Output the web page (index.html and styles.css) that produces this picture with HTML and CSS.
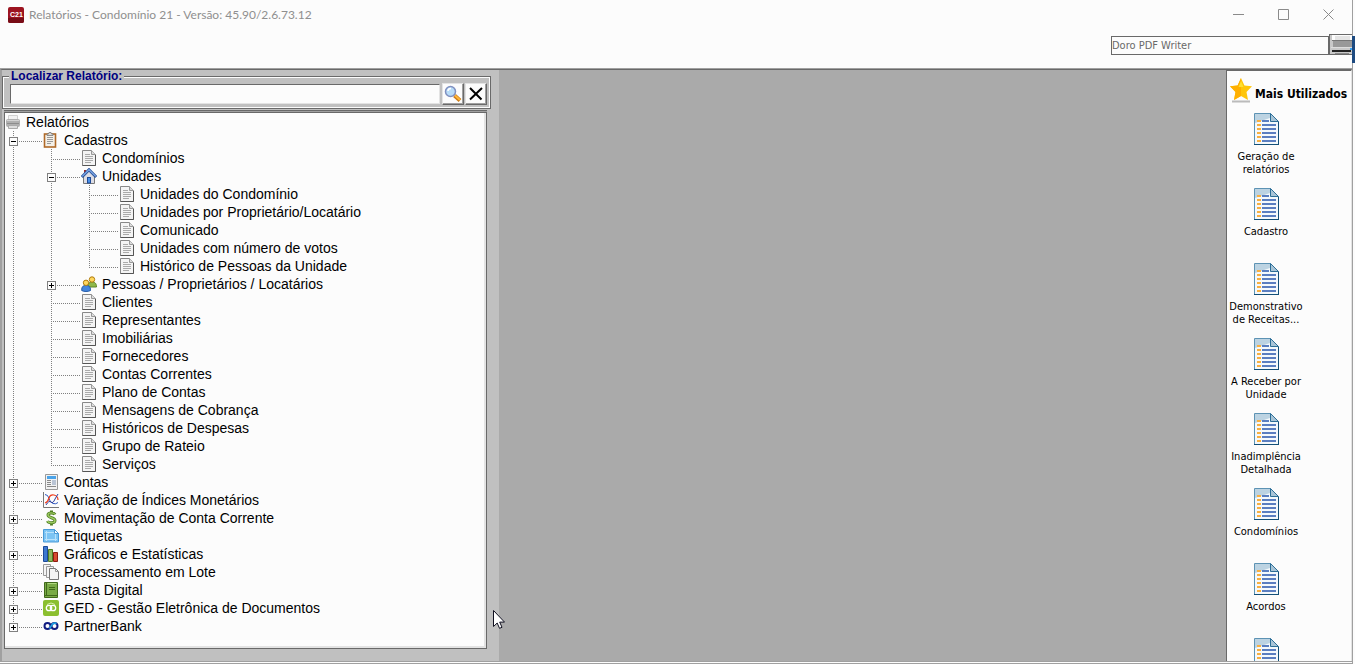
FILE: index.html
```
<!DOCTYPE html>
<html lang="pt-BR">

<head>
    <meta charset="utf-8">
    <meta name="viewport" content="width=device-width, initial-scale=1">
    <title>Relatórios - Condomínio 21</title>
    <link rel="stylesheet" href="styles.css">
</head>

<body>
<svg class="sprite" aria-hidden="true">
    <symbol id="i-doc" viewBox="0 0 16 16">
        <path d="M1.500 .5h9l4 4v11h-13z" fill="#f4f4f4" stroke="#888"/>
        <path d="M14.500 5v10.500h-13" fill="none" stroke="#555"/>
        <path d="M10.500 .5v4h4" fill="#ddd" stroke="#999"/>
        <path d="M4 4.500h5M4 6.500h8M4 8.500h8M4 10.500h8M4 12.500h6" stroke="#aaa"/>
    </symbol>
    <symbol id="i-printer" viewBox="0 0 16 16">
        <path d="M3.500 1.500h9v5h-9z" fill="#f2f2f2" stroke="#d0d0d0"/>
        <rect x="1" y="5" width="14" height="8" rx="2" fill="#b0b0b0"/>
        <path d="M2 6.500h12" stroke="#d4d4d4"/>
        <path d="M2 9.500h12" stroke="#8c8c8c"/>
        <path d="M3.500 11.500h9v3h-9z" fill="#dedede" stroke="#aaa"/>
    </symbol>
    <symbol id="i-clip" viewBox="0 0 16 16">
        <rect x="1.500" y="2" width="11" height="13" fill="#f4f0e8" stroke="#b06a28" stroke-width="1.600"/>
        <path d="M4 3.500V2h1.500l.5-1.500h2L8.500 2H10v1.500z" fill="#ddd" stroke="#777" stroke-width=".8"/>
        <path d="M4 5.500h6M4 7.500h6M4 9.500h6M4 11.500h4" stroke="#999"/>
    </symbol>
    <symbol id="i-home" viewBox="0 0 16 16">
        <path d="M3 2h2v5H3z" fill="#9a3030"/>
        <path d="M2.500 8L8 3l5.500 5v7.500h-11z" fill="#dcdce4" stroke="#777"/>
        <path d="M.8 9L8 1.800 15.200 9" fill="none" stroke="#2a549c" stroke-width="3"/>
        <path d="M1.200 8.400L8 1.700l6.800 6.700" fill="none" stroke="#7fa9e8" stroke-width="1.200"/>
        <rect x="6.500" y="9.500" width="3" height="5.500" fill="#4a90e8" stroke="#1d4a98"/>
    </symbol>
    <symbol id="i-people" viewBox="0 0 16 16">
        <path d="M7 11c0-4 1.500-5 4-5s4.500 1 4.500 5z" fill="#8fb84a" stroke="#5d8527"/>
        <circle cx="11" cy="3.500" r="2.700" fill="#ffd75e" stroke="#b07c10"/>
        <path d="M.7 14.500c0-4 1.300-5 4.300-5s4.500 1 4.500 5c-2 1.300-7 1.300-8.800 0z" fill="#4486dc" stroke="#245aa8"/>
        <circle cx="5" cy="6.800" r="2.700" fill="#ffd75e" stroke="#b07c10"/>
    </symbol>
    <symbol id="i-bill" viewBox="0 0 16 16">
        <path d="M2.500 .5h12v15h-12z" fill="#f2f2f2" stroke="#999"/>
        <path d="M4 2h9v3H4z" fill="#4aa3e8"/>
        <path d="M4 6.500h4M4 8.500h4M4 10.500h4M4 12.500h9" stroke="#888"/>
        <path d="M9 6h4v5H9z" fill="#b9c4d4"/>
    </symbol>
    <symbol id="i-chart" viewBox="0 0 16 16">
        <path d="M.5 0v15.500H16" fill="none" stroke="#777"/>
        <path d="M2 2.500q3 0 4 4t4 5 5-1" fill="none" stroke="#3058c0"/>
        <path d="M2 11q3-1 4-5t5-3 4 5" fill="none" stroke="#f04020" stroke-width="1.200"/>
        <path d="M3 13q3-5 5-3t4-3l3-5" fill="none" stroke="#30409c"/>
    </symbol>
    <symbol id="i-money" viewBox="0 0 16 16">
        <path d="M12 4.500C11 2.500 5 2 5 5s7 2.500 7 5.500-6.500 3-7.500.5M8.500 .5v3M8.500 12v3.500" fill="none" stroke="#4f7d22" stroke-width="3"/>
        <path d="M12 4.500C11 2.500 5 2 5 5s7 2.500 7 5.500-6.500 3-7.500.5" fill="none" stroke="#9ccb60" stroke-width="1.400"/>
    </symbol>
    <symbol id="i-label" viewBox="0 0 16 16">
        <path d="M.5 1.500h11l4 4v8.500H.5z" fill="#7cc4f4" stroke="#4a9bd8"/>
        <path d="M2 4.500h9M2 11.500h12M3.500 3v10M12.500 6v7" fill="none" stroke="#b9e2fb"/>
        <path d="M11.500 1.500v4h4z" fill="#fff" stroke="#4a9bd8"/>
    </symbol>
    <symbol id="i-bars" viewBox="0 0 16 16">
        <path d="M.5 .5h4v15h-4z" fill="#3c78d0" stroke="#1d4a98"/>
        <path d="M5.500 3.500h4v12h-4z" fill="#8db660" stroke="#4f7d22"/>
        <path d="M10.500 6.500h4v9h-4z" fill="#d84a30" stroke="#8c1c10"/>
    </symbol>
    <symbol id="i-batch" viewBox="0 0 16 16">
        <path d="M.5 .5h7v11h-7z" fill="#f4f4f4" stroke="#999"/>
        <path d="M3.500 2.500h7v11h-7z" fill="#f4f4f4" stroke="#999"/>
        <path d="M6.500 4.500h6l3 3v8h-9z" fill="#f4f4f4" stroke="#777"/>
        <path d="M12.500 4.500v3h3" fill="none" stroke="#999"/>
    </symbol>
    <symbol id="i-book" viewBox="0 0 16 16">
        <path d="M1.500 .5h13v15h-13z" fill="#79aa45" stroke="#41691b"/>
        <path d="M3.500 1v12M2 13.500h12" stroke="#41691b"/>
        <path d="M6 5.500h6M6 7.500h6" stroke="#41691b"/>
        <path d="M4.500 1.500h9" stroke="#b0d880"/>
    </symbol>
    <symbol id="i-ged" viewBox="0 0 16 16">
        <rect width="16" height="16" rx="2" fill="#8bbf2f"/>
        <circle cx="6" cy="8" r="2.700" fill="none" stroke="#fff" stroke-width="1.300"/>
        <circle cx="10" cy="8" r="2.700" fill="none" stroke="#fff" stroke-width="1.300"/>
        <path d="M4 4.500q4-3 8 0" fill="none" stroke="#d8efa8"/>
    </symbol>
    <symbol id="i-bank" viewBox="0 0 16 16">
        <circle cx="4.500" cy="8" r="3" fill="none" stroke="#101c80" stroke-width="2"/>
        <circle cx="11.500" cy="8" r="3" fill="none" stroke="#101c80" stroke-width="2"/>
        <path d="M6.500 10.500l3-4.500q2-1.500 4-.5" fill="none" stroke="#1ea0e0" stroke-width="1.600"/>
    </symbol>
    <symbol id="i-report" viewBox="0 0 25 32">
        <path d="M.5 .5h16l8 8v23H.5z" fill="#f4f9fc" stroke="#5d93b4"/>
        <path d="M1 1h15v4L1 10z" fill="#bcd3e2"/>
        <path d="M16.500 .5v8h8z" fill="#a8c4d6" stroke="#2d6f98"/>
        <path d="M0 31.500h25M24.500 9v23" stroke="#145078"/>
        <path d="M3 8h4M3 12h4M3 16h4M3 20h4M3 24h4M3 28h4" stroke="#f8b040" stroke-width="2"/>
        <path d="M8 8h7M8 12h14M8 16h14M8 20h14M8 24h14M8 28h14" stroke="#5a7ec0" stroke-width="2"/>
    </symbol>
</svg>

<div class="window">
    <header class="titlebar">
        <svg class="logo" viewBox="0 0 16 16" aria-hidden="true">
            <rect width="16" height="16" rx="2" fill="#9c1420"/>
            <path d="M0 11h16v3q0 2-2 2H2q-2 0-2-2z" fill="#780c16"/>
            <text class="logo-text" x="2" y="10" fill="#fff">C21</text>
        </svg>
        <h1 class="title">Relatórios - Condomínio 21 - Versão: 45.90/2.6.73.12</h1>
        <div class="controls">
            <button type="button" aria-label="Minimizar"><svg viewBox="0 0 11 11"><path d="M0 5.500h11"/></svg></button>
            <button type="button" aria-label="Maximizar"><svg viewBox="0 0 11 11"><path d="M.5 .5h10v10H.5z"/></svg></button>
            <button type="button" aria-label="Fechar"><svg viewBox="0 0 11 11"><path d="M.5 .5l10 10M10.500 .5l-10 10"/></svg></button>
        </div>
    </header>

    <div class="toolbar">
        <input class="printer-name" type="text" value="Doro PDF Writer" aria-label="Impressora" readonly>
        <button class="printer-btn" type="button" aria-label="Selecionar impressora">
            <svg viewBox="0 0 22 19" aria-hidden="true">
                <path d="M0 0h22v19H0z" fill="#c8c8c8"/>
                <path d="M2 0h20v5H2z" fill="#fcfcfc"/>
                <path d="M5 1h15v4H5z" fill="#e4e4e4"/>
                <path d="M3 6h19v6H3z" fill="#999"/>
                <path d="M2 5.500h20" stroke="#777"/>
                <path d="M1 12.500h21" stroke="#ddd"/>
                <path d="M2 16h19" stroke="#222" stroke-width="2"/>
                <path d="M20 14h2" stroke="#38a0f0" stroke-width="2"/>
                <path d="M5 18.500h14" stroke="#888"/>
            </svg>
        </button>
    </div>

    <main class="workspace">
        <section class="sidebar">
            <form class="search">
                <fieldset>
                    <legend><label for="busca">Localizar Relatório:</label></legend>
                    <div class="search-row">
                        <input type="text" id="busca">
                        <button type="button" aria-label="Pesquisar">
                            <svg viewBox="0 0 18 18" aria-hidden="true">
                                <path d="M10.500 10.500l5.500 5" stroke="#c87818" stroke-width="4"/>
                                <path d="M11 10.500l5 4.500" stroke="#ffb838" stroke-width="2"/>
                                <circle cx="6.500" cy="6.500" r="5" fill="#b8dcf8" stroke="#8090c0" stroke-width="1.500"/>
                                <path d="M4 6q0-2.500 3-2.500" fill="none" stroke="#fff" stroke-width="1.500"/>
                            </svg>
                        </button>
                        <button type="reset" aria-label="Limpar">
                            <svg viewBox="0 0 18 18" aria-hidden="true">
                                <path d="M3 3l11.500 11.500M15 3L3 14.500" stroke="#000" stroke-width="2"/>
                            </svg>
                        </button>
                    </div>
                </fieldset>
            </form>

            <nav class="tree" aria-label="Relatórios">
                <div class="row"><svg><use href="#i-printer"/></svg><span>Relatórios</span></div>
                <ul class="top">
                    <li>
                        <div class="row"><div class="branch"><button class="toggle" type="button" aria-label="Recolher Cadastros"></button></div><svg><use href="#i-clip"/></svg><span>Cadastros</span></div>
                        <ul>
                            <li><div class="row"><div class="branch"></div><svg><use href="#i-doc"/></svg><span>Condomínios</span></div></li>
                            <li>
                                <div class="row"><div class="branch"><button class="toggle" type="button" aria-label="Recolher Unidades"></button></div><svg><use href="#i-home"/></svg><span>Unidades</span></div>
                                <ul>
                                    <li><div class="row"><div class="branch"></div><svg><use href="#i-doc"/></svg><span>Unidades do Condomínio</span></div></li>
                                    <li><div class="row"><div class="branch"></div><svg><use href="#i-doc"/></svg><span>Unidades por Proprietário/Locatário</span></div></li>
                                    <li><div class="row"><div class="branch"></div><svg><use href="#i-doc"/></svg><span>Comunicado</span></div></li>
                                    <li><div class="row"><div class="branch"></div><svg><use href="#i-doc"/></svg><span>Unidades com número de votos</span></div></li>
                                    <li><div class="row"><div class="branch"></div><svg><use href="#i-doc"/></svg><span>Histórico de Pessoas da Unidade</span></div></li>
                                </ul>
                            </li>
                            <li><div class="row"><div class="branch"><button class="toggle plus" type="button" aria-label="Expandir Pessoas"></button></div><svg><use href="#i-people"/></svg><span>Pessoas / Proprietários / Locatários</span></div></li>
                            <li><div class="row"><div class="branch"></div><svg><use href="#i-doc"/></svg><span>Clientes</span></div></li>
                            <li><div class="row"><div class="branch"></div><svg><use href="#i-doc"/></svg><span>Representantes</span></div></li>
                            <li><div class="row"><div class="branch"></div><svg><use href="#i-doc"/></svg><span>Imobiliárias</span></div></li>
                            <li><div class="row"><div class="branch"></div><svg><use href="#i-doc"/></svg><span>Fornecedores</span></div></li>
                            <li><div class="row"><div class="branch"></div><svg><use href="#i-doc"/></svg><span>Contas Correntes</span></div></li>
                            <li><div class="row"><div class="branch"></div><svg><use href="#i-doc"/></svg><span>Plano de Contas</span></div></li>
                            <li><div class="row"><div class="branch"></div><svg><use href="#i-doc"/></svg><span>Mensagens de Cobrança</span></div></li>
                            <li><div class="row"><div class="branch"></div><svg><use href="#i-doc"/></svg><span>Históricos de Despesas</span></div></li>
                            <li><div class="row"><div class="branch"></div><svg><use href="#i-doc"/></svg><span>Grupo de Rateio</span></div></li>
                            <li><div class="row"><div class="branch"></div><svg><use href="#i-doc"/></svg><span>Serviços</span></div></li>
                        </ul>
                    </li>
                    <li><div class="row"><div class="branch"><button class="toggle plus" type="button" aria-label="Expandir Contas"></button></div><svg><use href="#i-bill"/></svg><span>Contas</span></div></li>
                    <li><div class="row"><div class="branch"></div><svg><use href="#i-chart"/></svg><span>Variação de Índices Monetários</span></div></li>
                    <li><div class="row"><div class="branch"><button class="toggle plus" type="button" aria-label="Expandir Movimentação"></button></div><svg><use href="#i-money"/></svg><span>Movimentação de Conta Corrente</span></div></li>
                    <li><div class="row"><div class="branch"></div><svg><use href="#i-label"/></svg><span>Etiquetas</span></div></li>
                    <li><div class="row"><div class="branch"><button class="toggle plus" type="button" aria-label="Expandir Gráficos"></button></div><svg><use href="#i-bars"/></svg><span>Gráficos e Estatísticas</span></div></li>
                    <li><div class="row"><div class="branch"></div><svg><use href="#i-batch"/></svg><span>Processamento em Lote</span></div></li>
                    <li><div class="row"><div class="branch"><button class="toggle plus" type="button" aria-label="Expandir Pasta Digital"></button></div><svg><use href="#i-book"/></svg><span>Pasta Digital</span></div></li>
                    <li><div class="row"><div class="branch"><button class="toggle plus" type="button" aria-label="Expandir GED"></button></div><svg><use href="#i-ged"/></svg><span>GED - Gestão Eletrônica de Documentos</span></div></li>
                    <li><div class="row"><div class="branch"><button class="toggle plus" type="button" aria-label="Expandir PartnerBank"></button></div><svg><use href="#i-bank"/></svg><span>PartnerBank</span></div></li>
                </ul>
            </nav>
        </section>

        <section class="content"></section>

        <aside class="favorites">
            <h2>
                <svg viewBox="0 0 22 25" aria-hidden="true">
                    <path d="M2 23.500h18" stroke="#bbb" stroke-width="2"/>
                    <path d="M11 0l3.400 7.500 7.600.8-5.500 5.700 1.500 8-7-4-7 4 1.500-8L0 8.300l7.600-.8z" fill="#ffc60a"/>
                    <path d="M11 0v18l-7 4 1.500-8L0 8.300l7.600-.8z" fill="#ffb000"/>
                    <path d="M11 3l2.500 6h-5z" fill="#ffe030"/>
                </svg>
                <span>Mais Utilizados</span>
            </h2>
            <div class="fav-list">
                <button type="button"><svg><use href="#i-report"/></svg>Geração de relatórios</button>
                <button type="button"><svg><use href="#i-report"/></svg>Cadastro</button>
                <button type="button"><svg><use href="#i-report"/></svg>Demonstrativo de Receitas...</button>
                <button type="button"><svg><use href="#i-report"/></svg>A Receber por Unidade</button>
                <button type="button"><svg><use href="#i-report"/></svg>Inadimplência Detalhada</button>
                <button type="button"><svg><use href="#i-report"/></svg>Condomínios</button>
                <button type="button"><svg><use href="#i-report"/></svg>Acordos</button>
                <button type="button" aria-label="Relatório"><svg><use href="#i-report"/></svg></button>
            </div>
        </aside>
    </main>
</div>

<div class="behind"></div>
<svg class="cursor" viewBox="0 0 12 19" aria-hidden="true">
    <path d="M.5 .5v16l3.700-3.500 2.300 5.300 2.500-1-2.300-5.200h4.800z" fill="#fff" stroke="#101020"/>
</svg>
</body>

</html>
```

FILE: styles.css
```
* {
    box-sizing: border-box;
}

body {
    margin: 0;
    height: 100vh;
    overflow: hidden;
    background: #fcfcfc;
    font-family: "Liberation Sans", Arial, sans-serif;
    font-size: 14px;
    color: #000;
}

button {
    padding: 0;
    font: inherit;
    color: inherit;
}

.sprite {
    display: none;
}

.window {
    display: flex;
    flex-direction: column;
    height: 100%;
    margin-right: 2px;
    border-right: 1px solid #a0a0a0;
}

/* title bar */
.titlebar {
    display: flex;
    align-items: center;
    height: 29px;
    padding-left: 8px;
}

.logo {
    width: 16px;
    height: 16px;
}

.logo-text {
    font-size: 7px;
    font-weight: bold;
}

.title {
    margin: 0 0 0 5px;
    font: 12px/16px Lato, sans-serif;
    color: #8f8f8f;
}

.controls {
    display: flex;
    margin-left: auto;
    padding-right: 1px;
}

.controls button {
    width: 45px;
    height: 29px;
    border: 0;
    background: none;
}

.controls svg {
    display: block;
    width: 11px;
    height: 11px;
    margin: 0 auto;
    fill: none;
    stroke: #8a8a8a;
}

.toolbar {
    display: flex;
    justify-content: flex-end;
    align-items: flex-end;
    height: 39px;
    padding-bottom: 13px;
}

.printer-name {
    width: 218px;
    height: 19px;
    padding: 0;
    border: 1px solid #696969;
    background: #fcfcfc;
    font: 11px "DejaVu Sans Condensed", Tahoma, sans-serif;
    color: #696969;
}

.printer-btn {
    width: 23px;
    height: 21px;
    border: 1px solid #696969;
    border-right: 0;
    background: #e8e8e8;
}

.printer-btn svg {
    display: block;
    width: 22px;
    height: 19px;
}

.workspace {
    display: grid;
    grid-template-columns: 499px 1fr 126px;
    flex: 1;
    min-height: 0;
    border-top: 1px solid #a0a0a0;
    border-bottom: 3px double #a0a0a0;
}

.content {
    border-top: 1px solid #696969;
    background: #aaa;
}

/* left panel */
.sidebar {
    display: flex;
    flex-direction: column;
    padding: 0 8px 12px 0;
    border-top: 1px solid #696969;
    border-left: 2px solid #a0a0a0;
    background: #c0c0c0;
}

.search fieldset {
    margin: 0;
    padding: 0 3px 3px 7px;
    border: 1px solid #696969;
    box-shadow: inset 0 0 0 1px #fcfcfc;
}

.search legend {
    margin-left: -1px;
    padding: 0 2px;
    background: #c0c0c0;
    font-size: 12px;
    font-weight: bold;
    line-height: 13px;
    color: #000080;
}

.search-row {
    display: flex;
    gap: 1px;
    align-items: center;
}

.search-row input {
    flex: 1;
    height: 20px;
    margin-right: 1px;
    border: 1px solid;
    border-color: #696969 #e3e3e3 #e3e3e3 #696969;
    background: #fcfcfc;
}

.search-row button {
    width: 22px;
    height: 22px;
    border: 1px solid;
    border-color: #e3e3e3 #696969 #696969 #e3e3e3;
    box-shadow: inset -1px -1px #a0a0a0;
    background: #fcfcfc;
}

.search-row svg {
    display: block;
    width: 18px;
    height: 18px;
    margin: 0 auto;
}

.tree {
    flex: 1;
    min-height: 0;
    overflow: hidden;
    margin: 3px 4px 0 2px;
    border: 1px solid #696969;
    box-shadow: 0 -1px #a0a0a0, 0 -2px #696969, inset -2px -2px #e3e3e3;
    background: #fcfcfc;
}

.tree ul {
    margin: 0;
    padding: 0 0 0 38px;
    list-style: none;
}

.tree .top {
    padding-left: 0;
}

/* vertical dotted guide */
.tree li {
    background: linear-gradient(#808080 50%, transparent 50%) 8px 0 / 1px 2px repeat-y;
}

/* last item: guide stops at the middle of the row */
.tree li:last-child {
    background:
        linear-gradient(#fcfcfc, #fcfcfc) 0 10px / 9px 100% no-repeat,
        linear-gradient(#808080 50%, transparent 50%) 8px 0 / 1px 2px repeat-y;
}

.row {
    display: flex;
    align-items: center;
    height: 18px;
    line-height: 18px;
    white-space: nowrap;
}

.row svg {
    width: 16px;
    height: 16px;
    margin-right: 5px;
}

.branch {
    width: 30px;
    height: 18px;
    margin-left: 8px;
    padding-top: 6px;
    background: linear-gradient(90deg, #808080 50%, transparent 50%) 0 10px / 2px 1px repeat-x;
}

.toggle {
    display: block;
    width: 9px;
    height: 9px;
    margin-left: -4px;
    border: 1px solid #808080;
    background: linear-gradient(#000, #000) center / 5px 1px no-repeat, #fcfcfc;
}

.toggle.plus {
    background:
        linear-gradient(#000, #000) center / 5px 1px no-repeat,
        linear-gradient(#000, #000) center / 1px 5px no-repeat,
        #fcfcfc;
}

/* right panel */
.favorites {
    overflow: hidden;
    border-top: 2px solid #696969;
    border-left: 1px solid #696969;
    border-right: 1px solid #e3e3e3;
    font-family: "DejaVu Sans Condensed", Tahoma, sans-serif;
}

.favorites h2 {
    display: flex;
    align-items: flex-end;
    gap: 3px;
    height: 42px;
    margin: 0;
    padding: 0 0 10px 3px;
    font-size: 12px;
    line-height: 18px;
    white-space: nowrap;
}

.favorites h2 svg {
    flex: none;
    width: 22px;
    height: 25px;
}

.fav-list {
    display: flex;
    flex-direction: column;
    width: 78px;
}

.fav-list button {
    display: flex;
    flex-direction: column;
    align-items: center;
    flex: none;
    height: 75px;
    border: 0;
    background: none;
    font-size: 11px;
    line-height: 13px;
}

.fav-list svg {
    width: 25px;
    height: 32px;
    margin-bottom: 5px;
}

/* edge of the window behind */
.behind {
    position: absolute;
    top: 36px;
    right: 0;
    width: 3px;
    height: 27px;
    background: #1d4a80;
}

.cursor {
    position: absolute;
    left: 493px;
    top: 610px;
    width: 12px;
    height: 19px;
}
```
